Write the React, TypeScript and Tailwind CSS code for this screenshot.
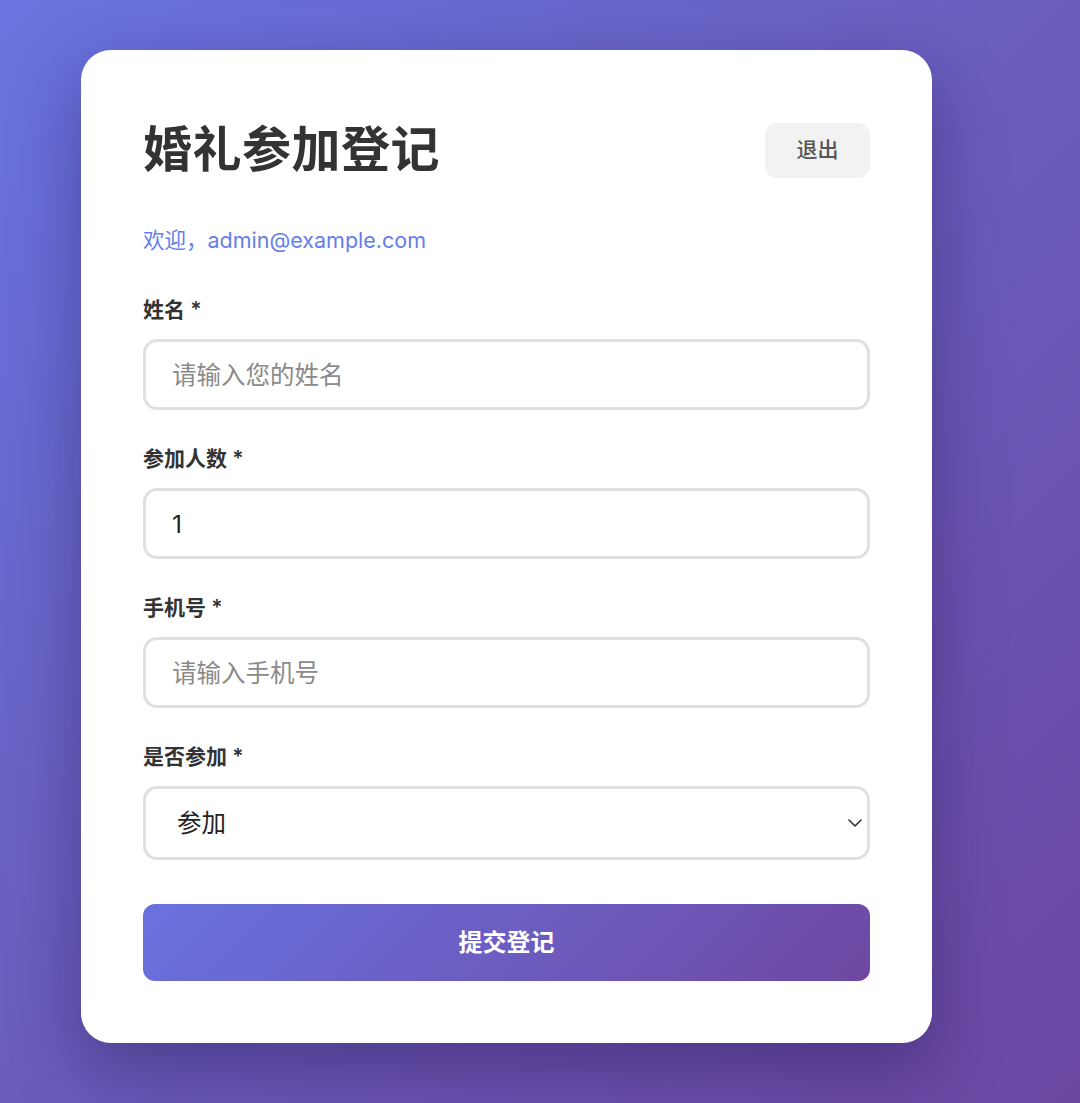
import React from "react";

const font = "font-['Inter','Noto_Sans_CJK_SC',sans-serif]";

function Label({ children }: { children: React.ReactNode }) {
  return (
    <label className="block mb-[14px] text-[21px] leading-[30px] font-semibold text-[#333]">
      {children}
    </label>
  );
}

export default function App() {
  return (
    <div
      className={`${font} w-[1080px] h-[1103px] overflow-hidden bg-[linear-gradient(135deg,#6874e0_0%,#6a5cbc_50%,#6b47a2_100%)] pt-[50px] pl-[81px]`}
    >
      <div className="w-[851px] h-[993px] bg-white rounded-[30px] shadow-[0_25px_70px_rgba(20,10,60,0.35)] px-[62px] pt-[71px] pb-[62px]">
        <div className="flex items-center justify-between">
          <h1 className="text-[49px] leading-[58px] font-bold text-[#333] tracking-[0.5px]">
            婚礼参加登记
          </h1>
          <button className="w-[105px] h-[55px] rounded-[12px] bg-[#f2f2f2] text-[21px] font-medium text-[#555]">
            退出
          </button>
        </div>
        <p className="mt-[46px] text-[21.5px] leading-[30px] text-[#667eea]">
          欢迎，admin@example.com
        </p>

        <div className="mt-[40px]">
          <Label>姓名 *</Label>
          <input
            className="block w-full h-[71px] border-[3px] border-[#e0e0e0] rounded-[14px] px-[26px] text-[24.5px] text-[#333] placeholder:text-[#8a8a8a] outline-none"
            placeholder="请输入您的姓名"
          />
        </div>

        <div className="mt-[34px]">
          <Label>参加人数 *</Label>
          <input
            className="block w-full h-[71px] border-[3px] border-[#e0e0e0] rounded-[14px] px-[26px] text-[24.5px] text-[#222] outline-none"
            defaultValue="1"
          />
        </div>

        <div className="mt-[34px]">
          <Label>手机号 *</Label>
          <input
            className="block w-full h-[71px] border-[3px] border-[#e0e0e0] rounded-[14px] px-[26px] text-[24.5px] text-[#333] placeholder:text-[#8a8a8a] outline-none"
            placeholder="请输入手机号"
          />
        </div>

        <div className="mt-[34px]">
          <Label>是否参加 *</Label>
          <div className="relative">
            <select className="block w-full h-[74px] appearance-none border-[3px] border-[#e0e0e0] rounded-[14px] pl-[31px] pr-[40px] text-[24.5px] text-[#222] bg-white outline-none">
              <option>参加</option>
              <option>不参加</option>
            </select>
            <svg
              className="absolute right-[8px] top-[33px] pointer-events-none"
              width="14"
              height="8"
              viewBox="0 0 14 8"
              fill="none"
            >
              <path d="M1 1L7 7L13 1" stroke="#333" strokeWidth="1.6" strokeLinecap="round" strokeLinejoin="round" />
            </svg>
          </div>
        </div>

        <button className="mt-[44px] w-full h-[77px] rounded-[12px] bg-[linear-gradient(135deg,#6972e0_0%,#6e48a2_100%)] text-white text-[24px] font-bold">
          提交登记
        </button>
      </div>
    </div>
  );
}
